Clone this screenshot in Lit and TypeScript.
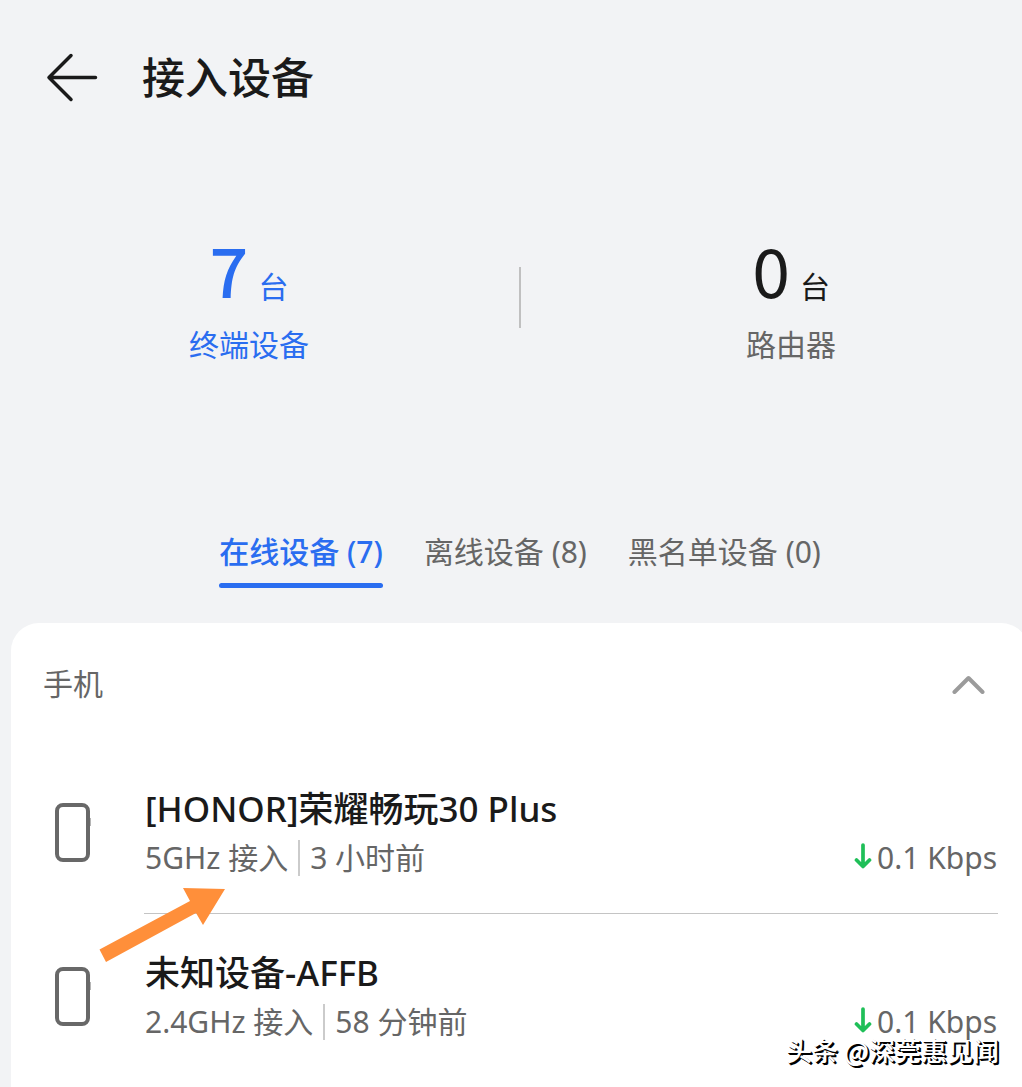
import { LitElement, html, svg, css } from "lit";
import { customElement, property, state } from "lit/decorators.js";
import { classMap } from "lit/directives/class-map.js";

interface Device {
  name: string;
  link: string;
  since: string;
  rate: string;
}

const DEVICES: Device[] = [
  { name: "[HONOR]荣耀畅玩30 Plus", link: "5GHz 接入", since: "3 小时前", rate: "0.1 Kbps" },
  { name: "未知设备-AFFB", link: "2.4GHz 接入", since: "58 分钟前", rate: "0.1 Kbps" },
];

const TABS = ["在线设备 (7)", "离线设备 (8)", "黑名单设备 (0)"];

@customElement("device-row")
export class DeviceRow extends LitElement {
  @property({ attribute: false }) device!: Device;

  static styles = css`
    :host {
      display: grid;
      grid-template-columns: 101px 1fr;
      align-items: stretch;
    }
    .icon {
      align-self: center;
      display: block;
      width: 40px;
      height: 60px;
      margin-left: 11px;
    }
    .body {
      box-sizing: border-box;
      height: 164px;
      padding-top: 34px;
      border-bottom: 1px solid #c4c4c4;
    }
    :host(.last) .body {
      border-bottom-color: transparent;
    }
    .name {
      margin: 0;
      padding-left: 1px;
      font-size: 35px;
      line-height: 50px;
      font-weight: 500;
      color: #1a1a1a;
      white-space: nowrap;
    }
    .detail {
      display: flex;
      align-items: center;
      padding: 0 1px;
      font-size: 30px;
      line-height: 48px;
      color: #666;
      white-space: nowrap;
    }
    .since {
      display: flex;
      align-items: center;
    }
    .since::before {
      content: "";
      width: 2px;
      height: 36px;
      margin: 0 10px;
      background: #cbcbcb;
    }
    .rate {
      display: flex;
      align-items: center;
      gap: 5px;
      margin-left: auto;
    }
    .down {
      display: block;
      width: 18px;
      height: 26px;
      margin-bottom: 4px;
    }
  `;

  render() {
    const d = this.device;
    return html`
      <svg class="icon" viewBox="0 0 40 60" fill="none" aria-hidden="true">
        <rect x="3" y="3" width="31" height="55" rx="6" stroke="#686868" stroke-width="4" />
        <path d="M35.500 16v8" stroke="#686868" stroke-width="2" />
      </svg>
      <div class="body">
        <h3 class="name">${d.name}</h3>
        <div class="detail">
          <span>${d.link}</span>
          <span class="since">${d.since}</span>
          <span class="rate">
            <svg class="down" viewBox="0 0 18 26" fill="none" aria-hidden="true">
              <path d="M9 2V23M2.500 17l6.500 6.500 6.500-6.500" stroke="#1fbf58" stroke-width="3.700" stroke-linecap="round" stroke-linejoin="round" />
            </svg>
            ${d.rate}
          </span>
        </div>
      </div>
    `;
  }
}

@customElement("app-root")
export class AppRoot extends LitElement {
  @state() private tab = 0;
  @state() private open = true;

  static styles = css`
    :host {
      display: block;
      position: relative;
      overflow: hidden;
      background: #f2f3f5;
      color: #1a1a1a;
      font-family: "Noto Sans", "Noto Sans CJK SC", sans-serif;
    }
    .page {
      display: flex;
      flex-direction: column;
      min-height: 100vh;
      margin-right: -18px;
    }
    button {
      margin: 0;
      padding: 0;
      border: 0;
      background: none;
      color: inherit;
      font: inherit;
      cursor: pointer;
    }
    svg {
      display: block;
    }
    .bar {
      display: flex;
      align-items: center;
      gap: 44px;
      height: 156px;
      padding-left: 46px;
    }
    .title {
      margin: 0;
      font-size: 43px;
      line-height: 60px;
      font-weight: 500;
    }
    .stats {
      display: grid;
      grid-template-columns: 1fr 44px 1fr;
      align-items: center;
      height: 283px;
    }
    .stat {
      display: flex;
      flex-direction: column;
      align-items: center;
    }
    .count {
      display: flex;
      align-items: baseline;
      gap: 10px;
      padding-top: 6px;
      font-family: "Noto Sans CJK SC", sans-serif;
      font-size: 30px;
      line-height: 72px;
    }
    .number {
      font-size: 68px;
    }
    .label {
      font-size: 30px;
      line-height: 48px;
      color: #666;
    }
    .stat.active,
    .stat.active .label {
      color: #2a6df0;
    }
    .stat.active .number {
      font-weight: 500;
    }
    .split {
      justify-self: center;
      width: 2px;
      height: 61px;
      background: #c0c0c0;
    }
    .tabs {
      display: flex;
      justify-content: center;
      align-items: flex-start;
      gap: 41px;
      padding-top: 89px;
      height: 95px;
    }
    .tab {
      font-size: 30px;
      line-height: 48px;
      color: #666;
      white-space: nowrap;
    }
    .tab.active {
      color: #2a6df0;
      font-weight: 500;
    }
    .tab.active::after {
      content: "";
      display: block;
      height: 5px;
      margin-top: 7px;
      border-radius: 3px;
      background: #2a6df0;
    }
    .card {
      flex: 1;
      margin: 0 11px;
      padding: 0 31px 9px 32px;
      border-radius: 28px 28px 0 0;
      background: #fff;
    }
    .group {
      display: flex;
      align-items: center;
      justify-content: space-between;
      width: 100%;
      height: 122px;
      margin-bottom: 5px;
      padding-right: 12px;
      font-size: 30px;
      line-height: 48px;
      color: #666;
    }
    .closed {
      transform: rotate(180deg);
    }
    .pointer {
      position: absolute;
      left: 98px;
      top: 886px;
    }
    .mark {
      position: absolute;
      right: 23px;
      top: 1030px;
      font-family: "Noto Sans CJK SC", sans-serif;
      font-size: 26px;
      line-height: 40px;
      font-weight: 500;
      color: #fff;
      text-shadow: 1px 1px 0 #000, 2px 2px 0 #000;
      white-space: nowrap;
    }
  `;

  private renderBack() {
    return svg`<svg width="52" height="50" viewBox="0 0 52 50" fill="none" aria-hidden="true">
      <path d="M49.500 24.500H3M25 2.500L3 24.500l22 22" stroke="#1a1a1a" stroke-width="3.500" stroke-linecap="round" stroke-linejoin="round" />
    </svg>`;
  }

  render() {
    return html`
      <div class="page">
        <header class="bar">
          <button aria-label="返回">${this.renderBack()}</button>
          <h1 class="title">接入设备</h1>
        </header>

        <section class="stats">
          <button class="stat active">
            <span class="count"><span class="number">7</span>台</span>
            <span class="label">终端设备</span>
          </button>
          <span class="split"></span>
          <button class="stat">
            <span class="count"><span class="number">0</span>台</span>
            <span class="label">路由器</span>
          </button>
        </section>

        <nav class="tabs" role="tablist">
          ${TABS.map(
            (t, i) => html`<button
              role="tab"
              aria-selected=${i === this.tab}
              class=${classMap({ tab: true, active: i === this.tab })}
              @click=${() => (this.tab = i)}
            >${t}</button>`
          )}
        </nav>

        <main class="card">
          <button class="group" aria-expanded=${this.open} @click=${() => (this.open = !this.open)}>
            <span>手机</span>
            <svg class=${classMap({ closed: !this.open })} width="34" height="20" viewBox="0 0 34 20" fill="none" aria-hidden="true">
              <path d="M2.500 18L16.500 4l14 14" stroke="#9b9b9b" stroke-width="4" stroke-linecap="round" stroke-linejoin="round" />
            </svg>
          </button>
          ${this.open
            ? DEVICES.map(
                (d, i) => html`<device-row class=${classMap({ last: i === DEVICES.length - 1 })} .device=${d}></device-row>`
              )
            : ""}
        </main>
      </div>

      <svg class="pointer" width="128" height="78" viewBox="0 0 128 78" aria-hidden="true">
        <path d="M85 2L127 3 105 39 98 27 8 76 1.500 63.500 92 15z" fill="#ff8f3a" />
      </svg>
      <div class="mark">头条 @深莞惠见闻</div>
    `;
  }
}
